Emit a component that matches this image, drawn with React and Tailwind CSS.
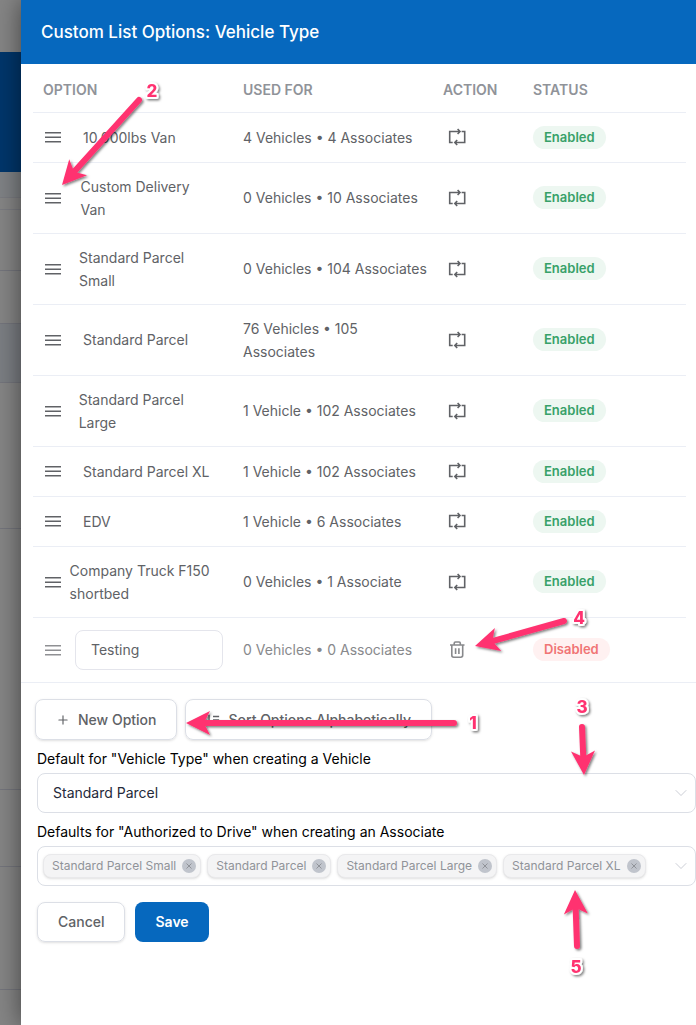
import React, { useState } from 'react';
import { ChevronDown, Plus } from 'lucide-react';

const initialOptions = [
  { name: '10,000lbs Van', usedFor: '4 Vehicles • 4 Associates' },
  { name: 'Custom Delivery Van', usedFor: '0 Vehicles • 10 Associates' },
  { name: 'Standard Parcel Small', usedFor: '0 Vehicles • 104 Associates' },
  { name: 'Standard Parcel', usedFor: '76 Vehicles • 105 Associates' },
  { name: 'Standard Parcel Large', usedFor: '1 Vehicle • 102 Associates' },
  { name: 'Standard Parcel XL', usedFor: '1 Vehicle • 102 Associates' },
  { name: 'EDV', usedFor: '1 Vehicle • 6 Associates' },
  { name: 'Company Truck F150 shortbed', usedFor: '0 Vehicles • 1 Associate' },
];

const defaultTags = ['Standard Parcel Small', 'Standard Parcel', 'Standard Parcel Large', 'Standard Parcel XL'];

// Borders of the page behind the drawer
const backdropRows = [
  'h-[52px]',
  'h-[120px] bg-[#00366b]',
  'h-[25px] bg-[#7f8285]',
  'h-[13px] border-y border-[#7a7b80]',
  'h-[61px] border-b border-[#74757c]',
  'h-[53px] border-b border-[#74757c]',
  'h-[59px] border-b border-[#74757c] bg-[#7b7e83]',
  'h-[146px] border-b border-[#74757c]',
  'h-[261px] border-b border-[#74757c]',
  'h-[77px] border-b border-[#74757c]',
  'h-[123px] border-b border-[#74757c]',
  'flex-1',
];

const callouts = [
  { label: '1', x: 473, y: 723, from: [454, 723], to: [186, 723] },
  { label: '2', x: 152, y: 91, from: [139, 100], to: [62, 185] },
  { label: '3', x: 582, y: 707, from: [582, 727], to: [584, 775] },
  { label: '4', x: 579, y: 618, from: [564, 621], to: [475, 646] },
  { label: '5', x: 576, y: 967, from: [577, 946], to: [575, 890] },
];

function Callouts() {
  return (
    <svg className="pointer-events-none absolute top-0 left-0 z-20" width="696" height="1025" aria-hidden="true">
      <defs>
        <filter id="calloutShadow" x="0" y="0" width="696" height="1025" filterUnits="userSpaceOnUse">
          <feDropShadow dx="1.5" dy="1.5" stdDeviation="1.2" floodColor="#000" floodOpacity="0.5" />
        </filter>
      </defs>
      {callouts.map(({ label, x, y, from, to }) => {
        const length = Math.hypot(to[0] - from[0], to[1] - from[1]);
        const angle = (Math.atan2(to[1] - from[1], to[0] - from[0]) * 180) / Math.PI;
        return (
          <g key={label} filter="url(#calloutShadow)">
            <g transform={`translate(${to[0]} ${to[1]}) rotate(${angle})`} fill="#ff3370">
              <path d={`M${-length} 0H-16`} stroke="#ff3370" strokeWidth="6" strokeLinecap="round" />
              <path d="M0 0L-24 -12L-18 0L-24 12Z" />
            </g>
            <text
              x={x}
              y={y + 6}
              textAnchor="middle"
              className="font-[Inter,sans-serif] text-[17px] font-extrabold"
              fill="#ff3370"
              stroke="#fff"
              strokeWidth="4"
              strokeLinejoin="round"
              paintOrder="stroke"
            >
              {label}
            </text>
          </g>
        );
      })}
    </svg>
  );
}

function DragHandle() {
  return (
    <button type="button" aria-label="Reorder" className="block shrink-0 text-[#606266]">
      <svg width="18" height="18" viewBox="0 0 18 18" stroke="currentColor" strokeWidth="1.5">
        <path d="M2 4.7H18M2 9.2H18M2 13.7H18" />
      </svg>
    </button>
  );
}

function SwapIcon() {
  return (
    <svg width="20" height="20" viewBox="0 0 20 20" fill="none" stroke="currentColor" strokeWidth="1.6">
      <path d="M5.7 15.5H2.7V4.5H12.5M10.6 2L13 4.5L10.6 7" />
      <path d="M14.6 4.5H17.7V15.5H8.5M10.2 13L7.8 15.5L10.2 18" />
    </svg>
  );
}

function TrashIcon() {
  return (
    <svg width="20" height="20" viewBox="0 0 20 20" fill="none" stroke="currentColor" strokeWidth="1.6">
      <path d="M3 5H17.5M7.2 5V3.2Q7.2 2 8.4 2H12.1Q13.3 2 13.3 3.2V5M4.8 5V15.3Q4.8 17.2 6.7 17.2H13.8Q15.7 17.2 15.7 15.3V5M8.6 8.3V14M11.9 8.3V14" />
    </svg>
  );
}

function SortIcon() {
  return (
    <svg width="14" height="14" viewBox="0 0 16 16" fill="none" stroke="currentColor" strokeWidth="1.5">
      <path d="M3.5 2V13.5M1 11L3.5 13.5L6 11M8 4H15M8 8H15M8 12H15" />
    </svg>
  );
}

export default function App() {
  const [draft, setDraft] = useState('Testing');
  const [tags, setTags] = useState(defaultTags);

  return (
    <div className="relative flex min-h-screen overflow-hidden bg-[#858585] font-[Inter,sans-serif] text-sm text-[#606266]">
      <div className="flex w-[21px] shrink-0 flex-col">
        {backdropRows.map((row, i) => (
          <div key={i} className={row} />
        ))}
      </div>

      <main className="z-10 min-w-0 flex-1 bg-white shadow-[0_0_24px_rgba(0,0,0,0.5)]">
        <header className="flex h-16 items-center bg-[#0668be] px-5">
          <h1 className="text-[17px] font-medium text-white">Custom List Options: Vehicle Type</h1>
        </header>

        <div className="border-b border-[#ebeef5] pr-[10px] pl-3">
          <table className="w-full table-fixed text-left">
            <thead>
              <tr className="h-12 border-b border-[#ebeef5] text-[#909399]">
                <th className="w-[200px] pt-1 pl-[10px] font-semibold">OPTION</th>
                <th className="w-[200px] pt-1 pl-[10px] font-semibold">USED FOR</th>
                <th className="w-[90px] pt-1 pl-[10px] font-semibold">ACTION</th>
                <th className="pt-1 pl-[10px] font-semibold">STATUS</th>
              </tr>
            </thead>
            <tbody className="leading-[23px]">
              {initialOptions.map((option) => (
                <tr key={option.name} className="h-[50px] border-b border-[#ebeef5]">
                  <td className="py-3 pl-[10px]">
                    <div className="flex items-center pr-[22px]">
                      <DragHandle />
                      {/* gives way before a long name does */}
                      <span className="w-[22px] shrink-2" />
                      <span>{option.name}</span>
                    </div>
                  </td>
                  <td className="py-3 pr-[2px] pl-[10px]">{option.usedFor}</td>
                  <td className="py-3 pl-[14px]">
                    <button type="button" aria-label={`Replace ${option.name}`} className="block">
                      <SwapIcon />
                    </button>
                  </td>
                  <td className="py-3 pl-[10px]">
                    <span className="block w-fit rounded-full bg-[#edf7f1] px-[11px] text-[13px] font-semibold text-[#38a169]">
                      Enabled
                    </span>
                  </td>
                </tr>
              ))}
              <tr className="h-[65px]">
                <td className="pl-[10px]">
                  <div className="flex items-center gap-[14px] pr-[10px]">
                    <span className="opacity-70">
                      <DragHandle />
                    </span>
                    <input
                      aria-label="Option name"
                      value={draft}
                      onChange={(e) => setDraft(e.target.value)}
                      className="h-10 w-full min-w-0 rounded-lg border border-[#e4e5ec] px-[15px]"
                    />
                  </div>
                </td>
                <td className="pl-[10px] text-[#88898c]">0 Vehicles • 0 Associates</td>
                <td className="pl-[14px] text-[#88898c]">
                  <button type="button" aria-label="Delete option" className="block">
                    <TrashIcon />
                  </button>
                </td>
                <td className="pl-[10px]">
                  <span className="block w-fit rounded-full bg-[#fff1f1] px-[11px] text-[13px] font-semibold text-[#f07575]">
                    Disabled
                  </span>
                </td>
              </tr>
            </tbody>
          </table>
        </div>

        <div className="flex gap-2 px-[14px] pt-4">
          <button type="button" className="flex h-[41px] items-center gap-2 rounded-lg border border-[#dcdfe6] px-5 font-medium shadow-sm">
            <Plus size={14} strokeWidth={2} />
            New Option
          </button>
          <button type="button" className="flex h-[41px] items-center gap-2 rounded-lg border border-[#dcdfe6] px-5 font-medium shadow-sm">
            <SortIcon />
            Sort Options Alphabetically
          </button>
        </div>

        <form className="pl-4 text-black" onSubmit={(e) => e.preventDefault()}>
          <label htmlFor="default-type" className="mt-2 block leading-[21px]">
            Default for "Vehicle Type" when creating a Vehicle
          </label>
          <div className="relative mt-1 text-[#252a3a]">
            <select id="default-type" defaultValue="Standard Parcel" className="h-10 w-full appearance-none rounded-lg border border-[#dcdfe6] px-[15px]">
              {initialOptions.map((option) => (
                <option key={option.name}>{option.name}</option>
              ))}
            </select>
            <ChevronDown size={20} strokeWidth={1} className="pointer-events-none absolute top-[10px] right-[5px] text-[#c0c4cc]" />
          </div>

          <label htmlFor="default-drive" className="mt-2 block leading-[21px]">
            Defaults for "Authorized to Drive" when creating an Associate
          </label>
          <div className="mt-1 flex h-10 items-center gap-[6px] rounded-lg border border-[#dcdfe6] pr-1 pl-[5px]">
            {tags.map((tag) => (
              <span key={tag} className="flex h-6 shrink-0 items-center gap-[6px] rounded-lg border border-[#e9e9eb] bg-[#f4f4f5] pr-1 pl-2 text-xs text-[#909399] shadow">
                {tag}
                <button
                  type="button"
                  aria-label={`Remove ${tag}`}
                  onClick={() => setTags(tags.filter((t) => t !== tag))}
                  className="flex size-[14px] items-center justify-center rounded-full bg-[#c0c4cc]"
                >
                  <svg width="8" height="8" viewBox="0 0 8 8" stroke="#909399">
                    <path d="M1.5 1.5L6.5 6.5M6.5 1.5L1.5 6.5" />
                  </svg>
                </button>
              </span>
            ))}
            <button type="button" id="default-drive" className="ml-auto text-[#c0c4cc]">
              <ChevronDown size={20} strokeWidth={1} />
            </button>
          </div>

          <div className="mt-4 flex gap-[10px] font-medium">
            <button type="button" className="h-10 rounded-lg border border-[#dcdfe6] px-5 text-[#606266] shadow-sm">
              Cancel
            </button>
            <button type="submit" className="h-10 rounded-lg bg-[#0668be] px-5 font-semibold text-white">
              Save
            </button>
          </div>
        </form>
      </main>

      <Callouts />
    </div>
  );
}
